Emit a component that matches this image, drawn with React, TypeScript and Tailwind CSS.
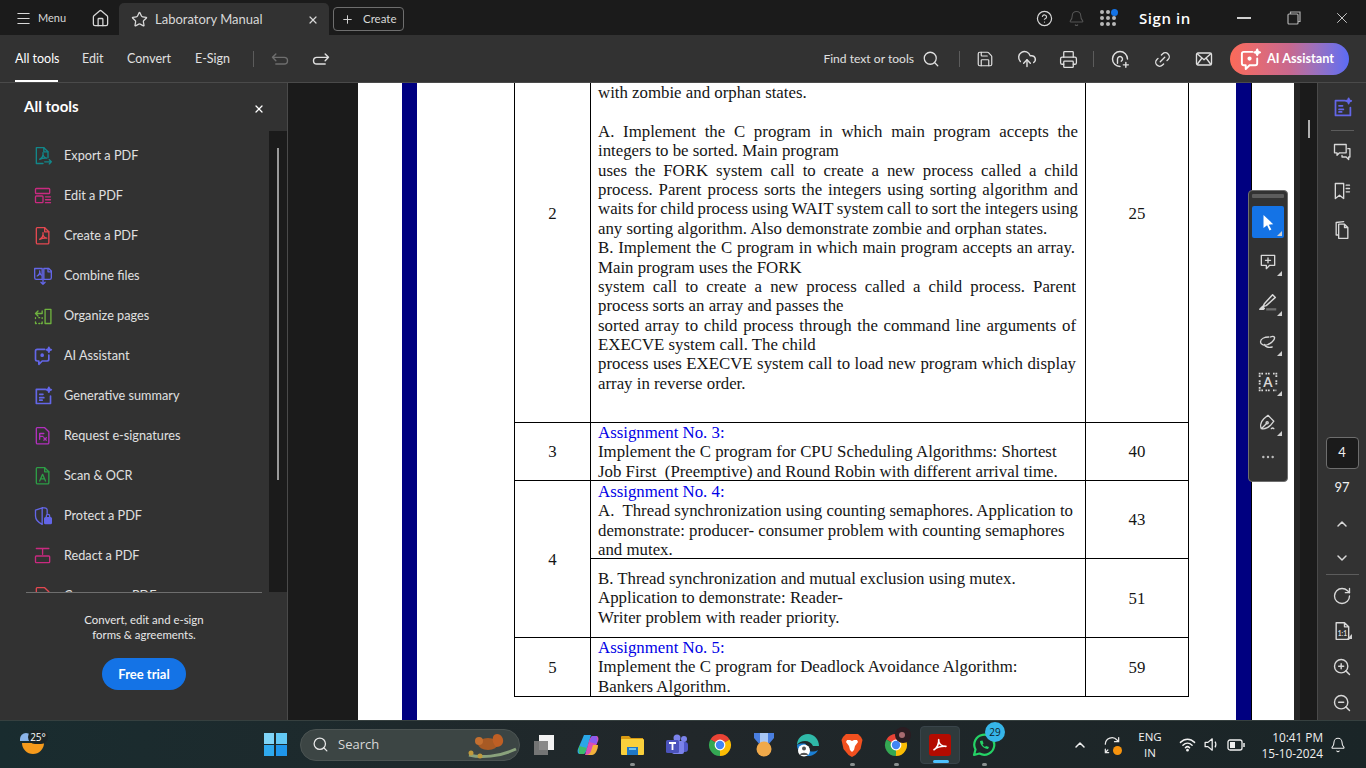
import { Bell, ChevronDown, ChevronUp, CircleHelp, CloudUpload, Ellipsis, House, Link2, Menu, Plus, Printer, RotateCw, Save, Search, Star, X, ZoomIn, ZoomOut } from 'lucide-react'
import type { ReactNode } from 'react'

const Ic = ({ size = 20, children, className = '', sw = 1.6 }: { size?: number; children: ReactNode; className?: string; sw?: number }) => (
  <svg width={size} height={size} viewBox="0 0 24 24" fill="none" stroke="currentColor" strokeWidth={sw} strokeLinecap="round" strokeLinejoin="round" className={className}>
    {children}
  </svg>
)

const acro = 'M8 16c2.5-1.5 4.5-5 4-8-.4 3 1.200 6 4.500 6.500-3-.3-6 .3-8.500 1.500z'

const Spark = () => <path d="M19 1.500l.8 2.200 2.200.8-2.200.8-.8 2.200-.8-2.200-2.200-.8 2.200-.8z" fill="currentColor" />

const AiChat = ({ size = 20 }: { size?: number }) => (
  <Ic size={size} sw={2}>
    <path d="M14 4H5a2 2 0 0 0-2 2v10a2 2 0 0 0 2 2h2v4l4-4h6a2 2 0 0 0 2-2v-5" />
    <circle cx="11" cy="11" r="1.200" fill="currentColor" />
    <Spark />
  </Ic>
)

const GenDoc = ({ size = 20 }: { size?: number }) => (
  <Ic size={size} sw={2}>
    <path d="M15 4H4v17h17v-9" />
    <path d="M8 10h4M8 14h5M8 17h3" />
    <Spark />
  </Ic>
)

const tools: { label: string; color: string; icon: ReactNode }[] = [
  {
    label: 'Export a PDF',
    color: 'text-[#12878a]',
    icon: (
      <Ic>
        <path d="M12 21H4V2h9l5 5v7" />
        <path d="M13 2v5h5" />
        <path d={acro} />
        <path d="M14 19h8M19.500 16.500 22 19l-2.500 2.500" />
      </Ic>
    ),
  },
  {
    label: 'Edit a PDF',
    color: 'text-[#c92a80]',
    icon: (
      <Ic>
        <rect x="3" y="3" width="17" height="6" rx="1" />
        <rect x="3" y="12" width="9" height="8" rx="1" />
        <path d="M15 13h6M15 16.500h6M15 20h6" />
      </Ic>
    ),
  },
  {
    label: 'Create a PDF',
    color: 'text-[#e34850]',
    icon: (
      <Ic>
        <path d="M5 2h9l5 5v13a1.500 1.500 0 0 1-1.500 1.500h-12A1.500 1.500 0 0 1 4 20V3a1 1 0 0 1 1-1z" />
        <path d="M14 2v5h5" />
        <path d={acro} />
      </Ic>
    ),
  },
  {
    label: 'Combine files',
    color: 'text-[#6366e8]',
    icon: (
      <Ic>
        <path d="M11 16H4a2 2 0 0 1-2-2V3h9zM13 16V3h6l3 3v8a2 2 0 0 1-2 2z" />
        <path d="M5 12c2-1 3.500-3 3-6 0 3 1 4.500 2 5M18 3v4h4" />
        <path d="M12 16v6M9.500 19.500 12 22l2.500-2.500" />
      </Ic>
    ),
  },
  {
    label: 'Organize pages',
    color: 'text-[#6fb33f]',
    icon: (
      <Ic>
        <rect x="14.500" y="4" width="7" height="17" />
        <path d="M3 9h8M3 9l3-3M3 9l3 3M11 9V6" />
        <path d="M3 14v1M7 14h1M11 14v1M3 19v2h1M7 21h1M11 19v2h-1" />
      </Ic>
    ),
  },
  { label: 'AI Assistant', color: 'text-[#6366e8]', icon: <AiChat /> },
  { label: 'Generative summary', color: 'text-[#6366e8]', icon: <GenDoc /> },
  {
    label: 'Request e-signatures',
    color: 'text-[#b130bd]',
    icon: (
      <Ic>
        <path d="M5 2h9l5 5v13a1.500 1.500 0 0 1-1.500 1.500h-12A1.500 1.500 0 0 1 4 20V3a1 1 0 0 1 1-1z" />
        <path d="M8 9h5M8 9v7M8 12.500h4M13 14l3 3M16 14l-3 3" />
      </Ic>
    ),
  },
  {
    label: 'Scan & OCR',
    color: 'text-[#2d9d46]',
    icon: (
      <Ic>
        <path d="M5 2h9l5 5v13a1.500 1.500 0 0 1-1.500 1.500h-12A1.500 1.500 0 0 1 4 20V3a1 1 0 0 1 1-1z" />
        <path d="M14 2v5h5M8 18l3.500-8 3.500 8M9.300 15.500h4.400" />
      </Ic>
    ),
  },
  {
    label: 'Protect a PDF',
    color: 'text-[#6366e8]',
    icon: (
      <Ic>
        <path d="M12 2 3 5v7c0 5 4 8 8 10M12 2c3 0 5 1 5 3v4M11 2v20" />
        <rect x="14" y="14" width="8" height="7" rx="1" fill="currentColor" />
        <path d="M16 14v-2a2 2 0 0 1 4 0v2" />
      </Ic>
    ),
  },
  {
    label: 'Redact a PDF',
    color: 'text-[#c92a80]',
    icon: (
      <Ic>
        <path d="M4 3h15M11.500 3v7" />
        <rect x="3" y="12" width="17" height="8" rx="1" />
      </Ic>
    ),
  },
  {
    label: 'Compress a PDF',
    color: 'text-[#e34850]',
    icon: (
      <Ic>
        <path d="M5 2h9l5 5v13H4V3a1 1 0 0 1 1-1z" />
      </Ic>
    ),
  },
]

const TitleBar = () => (
  <div className="h-[35px] flex items-end bg-[#1b1b1b] text-[#d8d8d8] shrink-0">
    <div className="h-[35px] w-[82px] flex items-center pl-[15px] pt-[2px] gap-[6px]">
      <Menu size={17} strokeWidth={1.5} />
      <span className="text-[11px]">Menu</span>
    </div>
    <div className="h-[35px] w-[37px] flex items-center justify-center pt-px">
      <House size={19} strokeWidth={1.6} />
    </div>
    <div className="w-[210px] h-[32px] bg-[#323232] rounded-t-[5px] flex items-center pl-[12px] pr-[10px] pt-px">
      <Star size={17} strokeWidth={1.8} />
      <span className="ml-[7px] text-[13px] flex-1">Laboratory Manual</span>
      <X size={12} strokeWidth={2.4} />
    </div>
    <div className="h-[35px] flex items-center ml-[4px] pt-[3px]">
      <div className="w-[71px] h-[24px] border border-[#6e6e6e] rounded-[4px] flex items-center pl-[7px] gap-[9px]">
        <Plus size={13} strokeWidth={1.8} />
        <span className="text-[11.5px]">Create</span>
      </div>
    </div>
    <div className="ml-auto h-[35px] flex items-center pt-px">
      <CircleHelp size={17} strokeWidth={1.7} className="mr-[15px]" />
      <Bell size={17} strokeWidth={1.5} className="mr-[15px] text-[#555555]" />
      <div className="relative mr-[23px] w-[16px] h-[16px] grid grid-cols-3 gap-[1.500px]">
        {[0, 1, 2, 3, 4, 5, 6, 7, 8].map((n) => (
          <span key={n} className="rounded-full bg-[#b8b8b8]" />
        ))}
        <span className="absolute -top-[1px] -right-[2px] w-[7px] h-[7px] rounded-full bg-[#1473e6]" />
      </div>
      <span className="text-[15px] font-semibold text-white mr-[46px] tracking-[0.6px] font-['Open_Sans',sans-serif]">Sign in</span>
      <span className="w-[14px] h-[1.500px] bg-[#d0d0d0] mr-[36px]" />
      <svg width="14" height="14" viewBox="0 0 14 14" fill="none" stroke="#b0b0b0" strokeWidth="1.200" className="mr-[32px]">
        <rect x="1" y="3" width="10" height="10" rx="1" />
        <path d="M3.500 3V1h9.500v9.500h-2" />
      </svg>
      <X size={18} strokeWidth={1.2} className="mr-[15px]" />
    </div>
  </div>
)

const ToolBar = () => (
  <div className="h-[48px] flex items-center pt-px bg-[#323232] border-b border-[#4a4a4a] text-[#e0e0e0] text-[12.5px] shrink-0 relative">
    <div className="ml-[15px] w-[67px] h-full flex items-center relative text-white">
      All tools
      <span className="absolute left-0 bottom-0 w-[43px] h-[2px] bg-white" />
    </div>
    <span className="w-[45px]">Edit</span>
    <span className="w-[68px]">Convert</span>
    <span className="w-[58px]">E-Sign</span>
    <span className="w-px h-[16px] bg-[#5c5c5c]" />
    <div className="w-[51px] flex justify-center text-[#6e6e6e]">
      <svg width="20" height="20" viewBox="0 0 24 24" fill="none" stroke="currentColor" strokeWidth="1.700" strokeLinecap="round" strokeLinejoin="round">
        <path d="M7 6 3 10l4 4M3 10h14a4 4 0 0 1 0 8H7" />
      </svg>
    </div>
    <div className="w-[31px] flex justify-center">
      <svg width="20" height="20" viewBox="0 0 24 24" fill="none" stroke="currentColor" strokeWidth="1.700" strokeLinecap="round" strokeLinejoin="round">
        <path d="m17 6 4 4-4 4M21 10H7a4 4 0 0 0 0 8h10" />
      </svg>
    </div>
    <div className="ml-auto flex items-center">
      <span className="text-[12.1px]">Find text or tools</span>
      <Search size={18} strokeWidth={1.7} className="ml-[8px] mr-[19px]" />
      <span className="w-px h-[16px] bg-[#5c5c5c] mr-[16px]" />
      <Save size={18} strokeWidth={1.6} className="mr-[23px]" />
      <CloudUpload size={20} strokeWidth={1.7} className="mr-[22px]" />
      <Printer size={19} strokeWidth={1.6} className="mr-[15px]" />
      <span className="w-px h-[16px] bg-[#5c5c5c] mr-[16px]" />
      <svg width="20" height="20" viewBox="0 0 24 24" fill="none" stroke="currentColor" strokeWidth="1.700" strokeLinecap="round" strokeLinejoin="round" className="mr-[23px]">
        <path d="M12 21a9 9 0 1 1 9-9M9 17v-5a3 3 0 1 1 4.500 2.600M19 16v6M16 19h6" />
      </svg>
      <Link2 size={19} strokeWidth={1.7} className="mr-[23px] -rotate-45" />
      <svg width="18" height="18" viewBox="0 0 24 24" fill="none" stroke="currentColor" strokeWidth="1.800" strokeLinejoin="round" className="mr-[17px]">
        <rect x="2" y="4" width="20" height="16" rx="2" />
        <path d="m3 5 9 8 9-8M3 19l6-8M21 19l-6-8" />
      </svg>
      <div className="w-[119px] h-[32px] rounded-full bg-gradient-to-r from-[#fb6a58] via-[#c8688e] to-[#5b6bf5] flex items-center pl-[9px] gap-[5px] text-white text-[12.7px] font-bold mr-[17px]">
        <AiChat size={23} />
        <span>AI Assistant</span>
      </div>
    </div>
  </div>
)

const SidePanel = () => (
  <div className="w-[288px] shrink-0 bg-[#323232] border-r border-[#4a4a4a] flex flex-col text-[#e0e0e0]">
    <div className="h-[48px] flex items-center justify-between pl-[24px] pr-[22px] pb-[2px] shrink-0">
      <span className="text-[15px] font-bold text-white">All tools</span>
      <X size={12} strokeWidth={2.6} className="mt-[6px] text-white" />
    </div>
    <div className="h-[461px] flex shrink-0">
      <div className="w-[269px] overflow-hidden pt-[5px]">
        {tools.map((t) => (
          <div key={t.label} className="h-[40px] flex items-center pl-[33px] text-[12.7px]">
            <span className={`w-[31px] ${t.color}`}>{t.icon}</span>
            <span>{t.label}</span>
          </div>
        ))}
      </div>
      <div className="w-[18px] bg-[#1b1b1b] pt-[17px] flex justify-center">
        <span className="w-[2px] h-[332px] bg-[#9a9a9a]" />
      </div>
    </div>
    <div className="ml-[26px] w-[236px] h-px bg-[#6e6e6e] shrink-0" />
    <div className="flex flex-col items-center w-[288px] pt-[19px] text-[11.4px] leading-[15px] text-[#e8e8e8]">
      <span>Convert, edit and e-sign</span>
      <span>forms & agreements.</span>
      <div className="mt-[16px] w-[84px] h-[32px] rounded-full bg-[#1473e6] text-white text-[13px] font-bold flex items-center justify-center">Free trial</div>
    </div>
  </div>
)

const L = ({ j, children, cls = '' }: { j?: boolean; children: ReactNode; cls?: string }) => (
  <div className={`h-[19.4px] ${j ? '[word-spacing:-2px] [text-align:justify] [text-align-last:justify]' : 'whitespace-nowrap'} ${cls}`}>{children}</div>
)

const Num = ({ children, cls = '' }: { children: ReactNode; cls?: string }) => (
  <div className={`border-r border-b border-black flex justify-center items-center pt-px ${cls}`}>{children}</div>
)

const Sheet = () => (
  <div className="w-[936px] shrink-0 bg-white flex overflow-hidden font-['Liberation_Serif',serif] text-[16.82px] leading-[19.4px] text-[#151515]">
    <div className="w-[44px] shrink-0" />
    <div className="w-[15px] shrink-0 bg-[#000080]" />
    <div className="w-[97px] shrink-0" />
    <div className="w-[675px] shrink-0 h-[614px] border-l border-black grid grid-cols-[76px_495px_103px] grid-rows-[340px_58px_78px_79px_59px]">
      <Num cls="!items-start !pt-[121px]">2</Num>
      <div className="border-r border-b border-black pl-[7px] pr-[7px]">
        <L>with zombie and orphan states.</L>
        <L>&nbsp;</L>
        <L j>A. Implement the C program in which main program accepts the</L>
        <L>integers to be sorted. Main program</L>
        <L j>uses the FORK system call to create a new process called a child</L>
        <L j>process. Parent process sorts the integers using sorting algorithm and</L>
        <L j>waits for child process using WAIT system call to sort the integers using</L>
        <L>any sorting algorithm. Also demonstrate zombie and orphan states.</L>
        <L j cls="pr-[3px]">B. Implement the C program in which main program accepts an array.</L>
        <L>Main program uses the FORK</L>
        <L j cls="pr-[2px]">system call to create a new process called a child process. Parent</L>
        <L>process sorts an array and passes the</L>
        <L j cls="pr-[2px]">sorted array to child process through the command line arguments of</L>
        <L>EXECVE system call. The child</L>
        <L j cls="pr-[2px]">process uses EXECVE system call to load new program which display</L>
        <L>array in reverse order.</L>
      </div>
      <Num cls="!items-start !pt-[121px]">25</Num>

      <Num>3</Num>
      <div className="border-r border-b border-black pl-[7px]">
        <L cls="text-[#0000e6]">Assignment No. 3:</L>
        <L>Implement the C program for CPU Scheduling Algorithms: Shortest</L>
        <L>Job First&nbsp; (Preemptive) and Round Robin with different arrival time.</L>
      </div>
      <Num>40</Num>

      <Num cls="row-span-2">4</Num>
      <div className="border-r border-b border-black pl-[7px] pt-px">
        <L cls="text-[#0000e6]">Assignment No. 4:</L>
        <L>A.&nbsp; Thread synchronization using counting semaphores. Application to</L>
        <L>demonstrate: producer- consumer problem with counting semaphores</L>
        <L>and mutex.</L>
      </div>
      <Num>43</Num>
      <div className="border-r border-b border-black pl-[7px] pt-[10px]">
        <L>B. Thread synchronization and mutual exclusion using mutex.</L>
        <L>Application to demonstrate: Reader-</L>
        <L>Writer problem with reader priority.</L>
      </div>
      <Num>51</Num>

      <Num>5</Num>
      <div className="border-r border-b border-black pl-[7px]">
        <L cls="text-[#0000e6]">Assignment No. 5:</L>
        <L>Implement the C program for Deadlock Avoidance Algorithm:</L>
        <L>Bankers Algorithm.</L>
      </div>
      <Num>59</Num>
    </div>
    <div className="w-[47px] shrink-0" />
    <div className="w-[16px] shrink-0 bg-[#000080] border-r border-black" />
  </div>
)

const Corner = () => <span className="absolute right-[2px] bottom-[2px] w-0 h-0 border-l-[5px] border-l-transparent border-b-[5px] border-b-[#d0d0d0]" />

const FloatTool = ({ children, active }: { children: ReactNode; active?: boolean }) => (
  <div className={`relative w-[32px] h-[32px] mb-[8px] flex items-center justify-center rounded-[2px] ${active ? 'bg-[#1473e6] text-white' : 'text-[#d8d8d8]'}`}>
    {children}
    <Corner />
  </div>
)

const FloatBar = () => (
  <div className="absolute left-[960px] top-[107px] w-[40px] h-[292px] bg-[#323232] border border-[#6e6e6e] rounded-[4px] flex flex-col items-center pt-[3px]">
    <span className="w-[32px] h-[4px] bg-[#5c5c5c] rounded-[1px] mb-[8px]" />
    <FloatTool active>
      <svg width="18" height="18" viewBox="0 0 24 24" fill="currentColor">
        <path d="M6 2.500 19 15l-6 .5 3.500 6.500-2.500 1.200-3.200-6.800L6 20z" />
      </svg>
    </FloatTool>
    <FloatTool>
      <Ic size={20}>
        <path d="M4 4h16v12h-6l-4 4v-4H4zM12 7v6M9 10h6" />
      </Ic>
    </FloatTool>
    <FloatTool>
      <svg width="22" height="22" viewBox="0 0 24 24" fill="none" stroke="currentColor" strokeWidth="1.600" strokeLinejoin="round">
        <path d="m8 14 9-10 3 3-10 9-3.500 1z" />
        <path d="m3 20 3-3 2 2-1 1z" fill="currentColor" />
        <path d="M10 20h11" stroke="#6e6e6e" strokeWidth="2.500" />
      </svg>
    </FloatTool>
    <FloatTool>
      <Ic size={20}>
        <path d="M13 6c-5 0-10 2-10 6 0 3 5 5 9 3 3-1 8-5 8-8 0-2-3-2-5-1M8 15c0 3 5 4 9 3" />
      </Ic>
    </FloatTool>
    <FloatTool>
      <svg width="20" height="20" viewBox="0 0 24 24" fill="none" stroke="currentColor" strokeWidth="2.200">
        <path d="M2 6V2h4M9 2h6M18 2h4v4M2 10v5M22 10v5M2 18v4h4M9 22h6M18 22h4" strokeDasharray="2 1" />
        <text x="12" y="18" textAnchor="middle" fontSize="16" fontWeight="700" fill="currentColor" stroke="none" fontFamily="Lato, sans-serif">A</text>
      </svg>
    </FloatTool>
    <FloatTool>
      <Ic size={20}>
        <path d="M4 20c-2-4 0-9 3-12l5-4 7 7-4 5c-3 3-7 5-11 4zM4 20l6-6" />
        <circle cx="11" cy="13" r="1.300" />
        <path d="M16 20c1-1 2-1 3 0" />
      </Ic>
    </FloatTool>
    <Ellipsis size={16} strokeWidth={1.6} className="text-[#c0c0c0] mt-[3px]" />
  </div>
)

const Rail = () => (
  <div className="w-[49px] shrink-0 bg-[#323232] border-l border-[#4a4a4a] flex flex-col items-center text-[#d8d8d8]">
    <div className="mt-[14px] text-[#6366e8]">
      <GenDoc size={21} />
    </div>
    <span className="mt-[12px] w-[23px] h-px bg-[#5c5c5c]" />
    <div className="mt-[11px]">
      <Ic size={20}>
        <path d="M3 3h14v10H9l-3 3v-3H3zM19 8h2.500v10H20v3l-3-3h-5v-2" />
      </Ic>
    </div>
    <div className="mt-[19px]">
      <Ic size={20}>
        <path d="M4 3h10v18l-5-4-5 4zM17 5h4M17 9h4M17 13h4" />
      </Ic>
    </div>
    <div className="mt-[19px]">
      <Ic size={20}>
        <path d="M8 22h11V9l-4-4H8zM15 5v4h4M8 18H5V3l9-1" />
      </Ic>
    </div>
    <div className="mt-[197px] w-[33px] h-[32px] bg-[#1b1b1b] border border-[#6e6e6e] rounded-[4px] flex items-center justify-center text-[13px] text-[#f0f0f0]">4</div>
    <span className="mt-[10px] text-[13px] leading-[16px] text-[#f0f0f0]">97</span>
    <ChevronUp size={16} strokeWidth={2.200} className="mt-[21px]" />
    <ChevronDown size={16} strokeWidth={2.200} className="mt-[18px]" />
    <span className="mt-[8px] w-[33px] h-px bg-[#5c5c5c]" />
    <RotateCw size={20} strokeWidth={1.6} className="mt-[11px] -scale-y-100 rotate-180 -scale-x-100" />
    <div className="relative mt-[15px] w-[24px] h-[20px] flex justify-center">
      <svg width="20" height="20" viewBox="0 0 24 24" fill="none" stroke="currentColor" strokeWidth="1.700" strokeLinejoin="round">
        <path d="M5 2h10l5 5v15H5zM15 2v5h5" />
        <text x="12.500" y="18" textAnchor="middle" fontSize="8" fontWeight="700" fill="currentColor" stroke="none" fontFamily="Lato, sans-serif">1:1</text>
      </svg>
      <Corner />
    </div>
    <ZoomIn size={20} strokeWidth={1.7} className="mt-[16px]" />
    <ZoomOut size={20} strokeWidth={1.7} className="mt-[16px]" />
  </div>
)

const chromeParts = (
  <>
    <path d="M12 12 2.470 6.500a11 11 0 0 1 19.060 0z" fill="#ea4335" />
    <path d="M12 12l9.530-5.500A11 11 0 0 1 12 23z" fill="#fbbc04" />
    <path d="M12 12v11A11 11 0 0 1 2.470 6.500z" fill="#34a853" />
    <circle cx="12" cy="12" r="5.400" fill="#fff" />
    <circle cx="12" cy="12" r="4.200" fill="#4285f4" />
  </>
)

const apps: { key: string; dot?: boolean; icon: ReactNode }[] = [
  {
    key: 'widgets',
    icon: (
      <svg width="24" height="24" viewBox="0 0 24 24">
        <rect x="7" y="2" width="15" height="15" fill="#f2f2f2" />
        <rect x="2" y="8" width="14" height="14" fill="#7d7d7d" fillOpacity="0.900" />
      </svg>
    ),
  },
  {
    key: 'copilot',
    icon: (
      <svg width="24" height="24" viewBox="0 0 24 24">
        <path d="M8 2h7l-4 14c-1 3-2 5-4 5H4C2 21 1 19 2 16z" fill="#2aa7e8" />
        <path d="M3 13c0 3-1 6 1 8h4l3-6z" fill="#3dbb6a" />
        <path d="M16 22H9l4-14c1-3 2-5 4-5h3c2 0 3 2 2 5z" fill="#d94fb5" />
        <path d="M21 11c0-3 1-6-1-8h-4l-3 6z" fill="#8a5cf0" />
        <path d="M9 22c3 0 5-1 6-4l2-6 5 0c0 5-3 10-6 10z" fill="#f3b13c" />
      </svg>
    ),
  },
  {
    key: 'folder',
    dot: true,
    icon: (
      <svg width="24" height="24" viewBox="0 0 24 24">
        <path d="M1 4a1 1 0 0 1 1-1h7l2 2h12v3H1z" fill="#d99a12" />
        <rect x="1" y="6" width="23" height="16" rx="1" fill="#fad03c" />
        <rect x="7" y="14" width="11" height="8" fill="#1f78c8" />
        <rect x="9" y="15" width="7" height="2" fill="#6fc3f0" />
      </svg>
    ),
  },
  {
    key: 'teams',
    icon: (
      <svg width="24" height="24" viewBox="0 0 24 24">
        <circle cx="20" cy="6" r="3" fill="#7b83eb" />
        <rect x="14" y="9" width="10" height="10" rx="3" fill="#5059c9" />
        <circle cx="13" cy="5" r="3.500" fill="#7b83eb" />
        <rect x="8" y="8" width="12" height="13" rx="2" fill="#7b83eb" />
        <rect x="2" y="7" width="13" height="13" rx="1.500" fill="#4b53bc" />
        <path d="M5 10h7M8.500 10v7" stroke="#fff" strokeWidth="1.800" />
      </svg>
    ),
  },
  {
    key: 'chrome',
    icon: (
      <svg width="24" height="24" viewBox="0 0 24 24">
        {chromeParts}
      </svg>
    ),
  },
  {
    key: 'medal',
    icon: (
      <svg width="24" height="26" viewBox="0 0 24 26">
        <path d="M2 1h20v5l-6 7H8L2 6z" fill="#4a7fe0" />
        <path d="M8 1h8v12H8z" fill="#a9c7f5" />
        <circle cx="12" cy="17" r="7.500" fill="#f0a94a" />
      </svg>
    ),
  },
  {
    key: 'edge',
    icon: (
      <svg width="24" height="24" viewBox="0 0 24 24">
        <path d="M12 1C5 1 1 6.500 1 12c3-5 13-6 16 1h6C23 6 18 1 12 1z" fill="#2fb9a8" />
        <path d="M1 12c0 6 5 11 11 11 4 0 8-2 10-6-5 3-13 2-12-6-4-1-8 0-9 1z" fill="#1b7fd4" />
        <circle cx="8" cy="17.500" r="6" fill="#fff" />
        <circle cx="8" cy="15.500" r="2" fill="#555" />
        <path d="M4 22c0-3 8-3 8 0z" fill="#555" />
      </svg>
    ),
  },
  {
    key: 'brave',
    dot: true,
    icon: (
      <svg width="24" height="26" viewBox="0 0 24 26">
        <path d="M6 2h12l3 3 1.500 3-2 9-5 6-3.500 2-3.500-2-5-6-2-9L3 5z" fill="#f1501f" />
        <path d="M7 8h3l2 1 2-1h3l1 2-3 4-1 4-2 2-2-2-1-4-3-4z" fill="#fff" />
      </svg>
    ),
  },
  {
    key: 'chrome2',
    dot: true,
    icon: (
      <div className="relative">
        <svg width="24" height="24" viewBox="0 0 24 24">
          {chromeParts}
        </svg>
        <span className="absolute -top-[6px] left-[11px] w-[16px] h-[16px] rounded-full bg-[#2b1c22]">
          <span className="absolute left-[4px] top-[5px] w-[6px] h-[6px] rounded-full bg-[#a86a70]" />
        </span>
      </div>
    ),
  },
]

const Taskbar = () => (
  <div className="h-[48px] shrink-0 flex items-center bg-gradient-to-r from-[#192c2f] via-[#21272a] to-[#1a2527] border-t border-[#36403f] text-[#f0f0f0] font-['Open_Sans',sans-serif]">
    <div className="w-[253px] shrink-0 pl-[20px]">
      <div className="relative w-[26px] h-[28px]">
        <span className="absolute left-0 top-[2px] w-[12px] h-[8px] rounded-t-full bg-[#8ab4e8]" />
        <span className="absolute left-[2px] top-[12px] w-[22px] h-[11px] rounded-b-full bg-[#f59a1c]" />
        <span className="absolute left-[8px] -top-[1px] w-[20px] h-[14px] rounded-full bg-[#1b2426] text-[10px] leading-[14px] text-center text-white">25°</span>
      </div>
    </div>
    <div className="w-[44px] h-[44px] flex items-center justify-center">
      <div className="w-[23px] h-[23px] grid grid-cols-2 gap-[1.500px]">
        <span className="bg-[#7fd4f7]" />
        <span className="bg-[#62c8f5]" />
        <span className="bg-[#2fa9ee]" />
        <span className="bg-[#1f96eb]" />
      </div>
    </div>
    <div className="ml-[3px] w-[220px] h-[32px] rounded-full bg-[#3c4544] border border-[#4c5453] flex items-center pl-[11px] relative">
      <Search size={17} strokeWidth={1.8} className="text-[#e8e8e8]" />
      <span className="ml-[9px] text-[13px] text-[#d8d8d8]">Search</span>
      <svg width="52" height="28" viewBox="0 0 52 28" className="absolute right-[1px] top-[1px]">
        <path d="M3 24c12 3 30 2 47-6" stroke="#8aa27c" strokeWidth="3" fill="none" />
        <ellipse cx="22" cy="13" rx="10" ry="6" fill="#a85a24" />
        <circle cx="13" cy="10" r="4" fill="#c46f30" />
        <path d="M30 16c6 0 9-5 6-10-2-4-8-4-9 0-1 3 0 7 3 10z" fill="#bf5f24" />
        <circle cx="5" cy="22" r="2.500" fill="#c09a3c" />
        <circle cx="14" cy="25" r="2.500" fill="#c09a3c" />
      </svg>
    </div>
    <div className="ml-[2px] flex">
      {apps.map((a) => (
        <div key={a.key} className="relative w-[44px] h-[44px] flex items-center justify-center">
          {a.icon}
          {a.dot && <span className="absolute bottom-[1px] w-[5px] h-[3px] rounded-full bg-[#8a9090]" />}
        </div>
      ))}
      <div className="relative w-[40px] h-[38px] mx-[2px] self-center rounded-[4px] bg-[#2f3a3c] border border-[#39444a] flex items-center justify-center">
        <div className="w-[22px] h-[22px] rounded-[3px] bg-[#b30b00] flex items-center justify-center text-white">
          <svg width="16" height="16" viewBox="0 0 24 24" fill="none" stroke="currentColor" strokeWidth="2.400" strokeLinejoin="round">
            <path d="M3 19c4-2 8-9 7-15-.5 6 4 10 11 10-7-.5-13 1-18 5z" />
          </svg>
        </div>
        <span className="absolute bottom-[0px] left-[12px] w-[16px] h-[3px] rounded-full bg-[#4cc2ff]" />
      </div>
      <div className="relative w-[44px] h-[44px] flex items-center justify-center">
        <svg width="24" height="24" viewBox="0 0 24 24" fill="none" stroke="#25d366" strokeWidth="2.200">
          <path d="M2 22l1.500-5.500A10 10 0 1 1 7.500 20.500z" strokeLinejoin="round" />
          <path d="M8 8c0 4 4 8 8 8l1-2-3-1-1 1c-1-.5-2-1.500-2.500-2.500l1-1-1-3z" fill="#25d366" stroke="none" />
        </svg>
        <span className="absolute top-[-1px] left-[23px] w-[20px] h-[20px] rounded-full bg-[#36b5e8] text-[10px] leading-[20px] text-center text-[#10222a]">29</span>
        <span className="absolute bottom-[1px] w-[5px] h-[3px] rounded-full bg-[#8a9090]" />
      </div>
    </div>
    <div className="ml-auto flex items-center">
      <div className="w-[32px] flex justify-center">
        <ChevronUp size={16} strokeWidth={2.200} />
      </div>
      <div className="relative w-[32px] flex justify-center">
        <svg width="20" height="20" viewBox="0 0 24 24" fill="none" stroke="#e8e8e8" strokeWidth="1.500" strokeLinecap="round">
          <path d="M4 11a8 8 0 0 1 14-5l2 2M20 3v5h-5M8 21H4v-4M4 21l3-3" />
        </svg>
        <span className="absolute left-[17px] bottom-[0px] w-[9px] h-[9px] rounded-full bg-[#f7930e]" />
      </div>
      <div className="w-[44px] text-center text-[11.5px] leading-[16px]">
        <div>ENG</div>
        <div>IN</div>
      </div>
      <div className="ml-[3px] w-[24px] flex justify-center">
        <svg width="17" height="17" viewBox="0 0 24 24" fill="none" stroke="#f0f0f0" strokeWidth="2" strokeLinecap="round">
          <path d="M2 9c6-6 14-6 20 0M5.500 13c4-4 9-4 13 0M9 16.500c2-2 4-2 6 0" />
          <circle cx="12" cy="20" r="1" fill="#f0f0f0" />
        </svg>
      </div>
      <div className="w-[24px] flex justify-center">
        <svg width="17" height="17" viewBox="0 0 24 24" fill="none" stroke="#f0f0f0" strokeWidth="1.800" strokeLinejoin="round">
          <path d="M3 9v6h4l6 5V4L7 9zM17 8c1.500 2 1.500 6 0 8" />
        </svg>
      </div>
      <div className="w-[26px] flex justify-center">
        <svg width="18" height="14" viewBox="0 0 18 14" fill="none" stroke="#f0f0f0" strokeWidth="1.300">
          <rect x="1" y="2" width="14" height="10" rx="2" />
          <rect x="3" y="4" width="5" height="6" fill="#f0f0f0" stroke="none" />
          <path d="M17 5v4" strokeWidth="1.500" />
        </svg>
      </div>
      <div className="w-[74px] text-right text-[11.8px] leading-[16px] whitespace-nowrap">
        <div>10:41 PM</div>
        <div>15-10-2024</div>
      </div>
      <div className="w-[29px] ml-[0px] flex justify-center">
        <Bell size={16} strokeWidth={1.6} />
      </div>
      <div className="w-[14px]" />
    </div>
  </div>
)

export default function App() {
  return (
    <div className="w-[1366px] h-[768px] overflow-hidden flex flex-col bg-[#1b1b1b] font-['Lato',sans-serif]">
      <TitleBar />
      <ToolBar />
      <div className="flex-1 flex min-h-0">
        <SidePanel />
        <div className="flex-1 flex relative min-w-0 bg-[#1b1b1b]">
          <div className="w-[70px] shrink-0" />
          <Sheet />
          <div className="w-[6px] shrink-0 bg-[#242424]" />
          <div className="flex-1 flex justify-center pt-[37px]">
            <span className="w-[2px] h-[18px] bg-[#b0b0b0]" />
          </div>
          <FloatBar />
        </div>
        <Rail />
      </div>
      <Taskbar />
    </div>
  )
}
